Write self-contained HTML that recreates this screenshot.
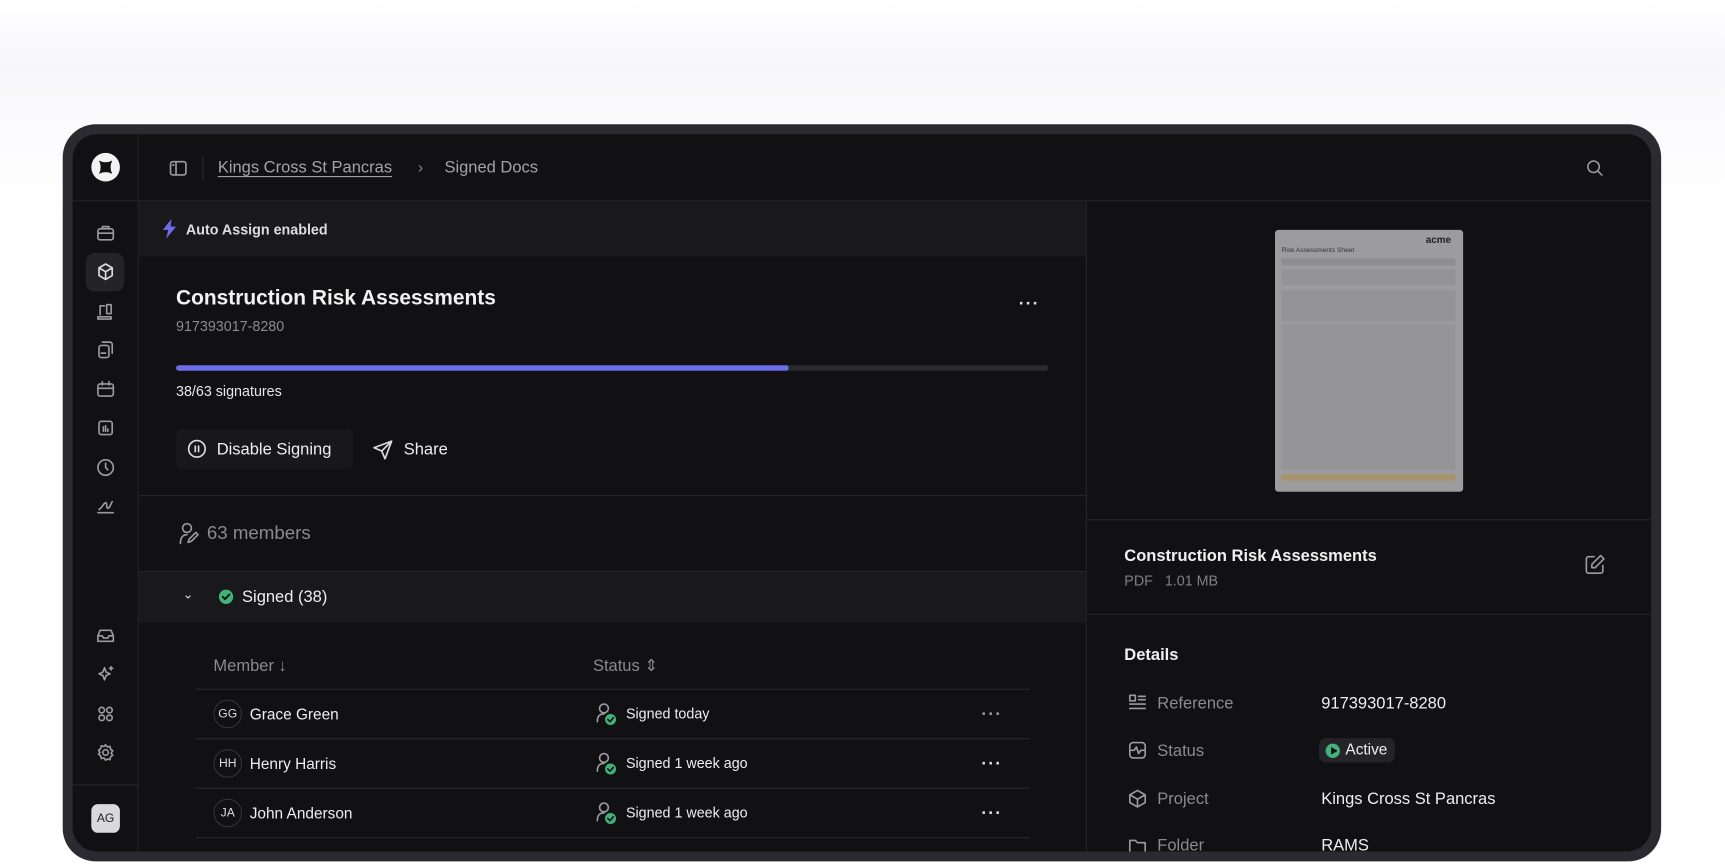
<!DOCTYPE html>
<html><head><meta charset="utf-8"><style>
*{box-sizing:border-box;margin:0;padding:0}
html,body{width:1725px;height:863px;overflow:hidden;background:#fff;font-family:"Liberation Sans",sans-serif}
#s{position:absolute;left:0;top:0;width:1568px;height:785px;transform:scale(1.1001);transform-origin:0 0;background:linear-gradient(#fff 0,#f7f7fb 60px,#fbfbfd 110px,#fff 200px)}
.a{position:absolute}
.frame{left:57px;top:113px;width:1453px;height:670px;background:#2b2a31;border-radius:30px}
.app{left:66px;top:122px;width:1435px;height:652px;background:#111113;border-radius:22px;overflow:hidden}
.vl{position:absolute;width:1px;background:#252528}
.hl{position:absolute;height:1px;background:#252528}
.t{position:absolute;white-space:nowrap;line-height:1}
svg{position:absolute;fill:none;stroke:#9a9aa0;stroke-width:1.5;stroke-linecap:round;stroke-linejoin:round}
.ic{width:18px;height:18px}
.av{position:absolute;width:26px;height:26px;border:1px solid #333;border-radius:50%;color:#ddd;font-size:11px;text-align:center;line-height:24px}
.dots{position:absolute;color:#ddd;font-size:16px;letter-spacing:1px;font-weight:bold}
</style></head><body><div id="s">
<div class="a frame"></div>
<div class="a app">
 <div class="vl" style="left:59px;top:0;height:700px"></div>
 <div class="hl" style="left:0;top:60px;width:1435px"></div>
 <div class="vl" style="left:921px;top:61px;height:640px"></div>
 <div class="a" style="left:17px;top:17px;width:26px;height:26px;border-radius:50%;background:#f2f2f2"></div>
 <svg style="left:22px;top:22px;width:16px;height:16px;stroke:none;fill:#111" viewBox="0 0 16 16"><path d="M2 2Q8 5 14 2Q11 8 14 14Q8 11 2 14Q5 8 2 2Z"/></svg>
 <div class="a" style="left:12px;top:108px;width:35px;height:35px;border-radius:8px;background:#242427"></div>
 <svg class="ic" style="left:21px;top:81px" viewBox="0 0 18 18"><rect x="2" y="5" width="14" height="10" rx="2"/><path d="M6 5V3h6v2M2 9h14"/></svg>
 <svg class="ic" style="left:21px;top:116px;stroke:#ddd" viewBox="0 0 18 18"><path d="M9 2l6 3.5v7L9 16l-6-3.5v-7z M3 5.5L9 9l6-3.5M9 9v7"/></svg>
 <svg class="ic" style="left:21px;top:152px" viewBox="0 0 18 18"><path d="M4 12V4h4M2 14h12v2H2zM10 3h4v8h-4z"/></svg>
 <svg class="ic" style="left:21px;top:187px" viewBox="0 0 18 18"><rect x="3" y="5" width="9" height="11" rx="2"/><path d="M6 2h7a2 2 0 012 2v8M5 12h4"/></svg>
 <svg class="ic" style="left:21px;top:223px" viewBox="0 0 18 18"><rect x="2" y="4" width="14" height="11" rx="2"/><path d="M6 2v3M12 2v3M2 8h14"/></svg>
 <svg class="ic" style="left:21px;top:258px" viewBox="0 0 18 18"><rect x="3" y="3" width="12" height="12" rx="2"/><path d="M7 12V8M9 12V7M11 12v-2"/></svg>
 <svg class="ic" style="left:21px;top:294px" viewBox="0 0 18 18"><circle cx="9" cy="9" r="7"/><path d="M9 5v4l2 2"/></svg>
 <svg class="ic" style="left:21px;top:329px" viewBox="0 0 18 18"><path d="M2 15h14M3 12c3-1 4-6 6-6s0 5 2 5 2-3 4-6"/></svg>
 <svg class="ic" style="left:21px;top:447px" viewBox="0 0 18 18"><path d="M2 9l2-5h10l2 5v5H2zM2 9h4l1 2h4l1-2h4"/></svg>
 <svg class="ic" style="left:21px;top:482px" viewBox="0 0 18 18"><path d="M8 3l1.5 4L13 8.5 9.5 10 8 14 6.5 10 3 8.5 6.5 7zM14 2v3M12.5 3.5h3"/></svg>
 <svg class="ic" style="left:21px;top:518px" viewBox="0 0 18 18"><circle cx="5.5" cy="5.5" r="2.5"/><circle cx="12.5" cy="5.5" r="2.5"/><circle cx="5.5" cy="12.5" r="2.5"/><circle cx="12.5" cy="12.5" r="2.5"/></svg>
 <svg class="ic" style="left:21px;top:553px" viewBox="0 0 18 18"><circle cx="9" cy="9" r="2.5"/><path d="M9 2l1.5 2 2.5-.5.5 2.5 2 1.5-1.5 2 1.5 2-2 1.5-.5 2.5-2.5-.5L9 16l-1.5-2-2.5.5-.5-2.5-2-1.5L4 9 2.5 7l2-1.5.5-2.5 2.5.5z"/></svg>
 <div class="hl" style="left:0;top:591px;width:59px"></div>
 <div class="a" style="left:17px;top:609px;width:26px;height:26px;border-radius:6px;background:#d9d9dc;color:#222;font-size:11px;text-align:center;line-height:26px">AG</div>
 <svg class="ic" style="left:87px;top:22px" viewBox="0 0 18 18"><rect x="2" y="3" width="14" height="12" rx="2"/><path d="M7 3v12M4 6h1"/></svg>
 <div class="vl" style="left:118px;top:20px;height:22px;background:#2a2a2d"></div>
 <div class="t" style="left:132px;top:23px;font-size:15px;color:#a3a3a8;text-decoration:underline;text-underline-offset:3px">Kings Cross St Pancras</div>
 <div class="t" style="left:314px;top:23px;font-size:14px;color:#888">›</div>
 <div class="t" style="left:338px;top:23px;font-size:15px;color:#a3a3a8">Signed Docs</div>
 <svg class="ic" style="left:1375px;top:22px;width:17px;height:17px" viewBox="0 0 18 18"><circle cx="8" cy="8" r="5.5"/><path d="M12 12l4 4"/></svg>
 <div class="a" style="left:60px;top:61px;width:861px;height:50px;background:#19191b"></div>
 <svg style="left:80px;top:77px;width:16px;height:18px;stroke:none;fill:#6d6cf0" viewBox="0 0 16 18"><path d="M10 0L2 10h5l-2 8 9-11H9z"/></svg>
 <div class="t" style="left:103px;top:80px;font-size:13px;color:#ddd;font-weight:bold">Auto Assign enabled</div>
 <div class="t" style="left:94px;top:140px;font-size:19px;color:#f2f2f2;font-weight:bold">Construction Risk Assessments</div>
 <div class="t" style="left:94px;top:168px;font-size:13px;color:#8a8a8f">917393017-8280</div>
 <div class="dots" style="left:860px;top:146px">···</div>
 <div class="a" style="left:94px;top:210px;width:793px;height:5px;border-radius:3px;background:#2a2a2e"></div>
 <div class="a" style="left:94px;top:210px;width:557px;height:5px;border-radius:3px;background:#6b6aea"></div>
 <div class="t" style="left:94px;top:227px;font-size:13px;color:#e6e6e6">38/63 signatures</div>
 <div class="a" style="left:94px;top:268px;width:161px;height:36px;border-radius:6px;background:#18181a"></div>
 <svg class="ic" style="left:104px;top:277px;stroke:#ddd" viewBox="0 0 18 18"><circle cx="9" cy="9" r="7.5"/><path d="M7.5 6.5v5M10.5 6.5v5"/></svg>
 <div class="t" style="left:131px;top:279px;font-size:15px;color:#eee">Disable Signing</div>
 <svg class="ic" style="left:272px;top:277px;stroke:#ddd;width:20px;height:20px" viewBox="0 0 20 20"><path d="M18 2L2 8l7 3 3 7zM9 11l9-9"/></svg>
 <div class="t" style="left:301px;top:279px;font-size:15px;color:#eee">Share</div>
 <div class="hl" style="left:60px;top:328px;width:861px"></div>
 <svg class="ic" style="left:96px;top:352px;width:20px;height:22px" viewBox="0 0 20 22"><circle cx="8" cy="6" r="4"/><path d="M2 20c0-5 2-8 6-8M16 10l2 2-6 6-3 1 1-3z"/></svg>
 <div class="t" style="left:122px;top:354px;font-size:17px;color:#8a8a8f">63 members</div>
 <div class="hl" style="left:60px;top:397px;width:861px"></div>
 <div class="a" style="left:60px;top:398px;width:861px;height:46px;background:#19191b"></div>
 <div class="t" style="left:100px;top:412px;font-size:12px;color:#ddd">⌄</div>
 <div class="a" style="left:133px;top:414px;width:13px;height:13px;border-radius:50%;background:#3fb37a"></div>
 <svg style="left:135px;top:416px;width:9px;height:9px;stroke:#111;stroke-width:1.8" viewBox="0 0 9 9"><path d="M1.5 4.5l2 2 4-4"/></svg>
 <div class="t" style="left:154px;top:413px;font-size:15px;color:#eee">Signed (38)</div>
 <div class="t" style="left:128px;top:476px;font-size:15px;color:#8a8a8f">Member ↓</div>
 <div class="t" style="left:473px;top:476px;font-size:15px;color:#8a8a8f">Status ⇕</div>
 <div class="hl" style="left:112px;top:504px;width:758px;background:#2a2a2d"></div>
 <div class="hl" style="left:112px;top:549px;width:758px;background:#2a2a2d"></div>
 <div class="hl" style="left:112px;top:594px;width:758px;background:#2a2a2d"></div>
 <div class="hl" style="left:112px;top:639px;width:758px;background:#2a2a2d"></div>
 <div class="av" style="left:128px;top:514px">GG</div><div class="t" style="left:161px;top:520px;font-size:14px;color:#eee">Grace Green</div>
 <div class="av" style="left:128px;top:559px">HH</div><div class="t" style="left:161px;top:565px;font-size:14px;color:#eee">Henry Harris</div>
 <div class="av" style="left:128px;top:604px">JA</div><div class="t" style="left:161px;top:610px;font-size:14px;color:#eee">John Anderson</div>
 <div class="t" style="left:503px;top:520px;font-size:13px;color:#eee">Signed today</div>
 <div class="t" style="left:503px;top:565px;font-size:13px;color:#eee">Signed 1 week ago</div>
 <div class="t" style="left:503px;top:610px;font-size:13px;color:#eee">Signed 1 week ago</div>
 <svg style="left:475px;top:516px;width:20px;height:22px" viewBox="0 0 20 22"><circle cx="8" cy="6" r="4"/><path d="M2 18c0-5 2-7 6-7"/><circle cx="14" cy="16" r="5" fill="#3fb37a" stroke="none"/><path d="M11.5 16l2 2 3-3.5" stroke="#111"/></svg>
 <svg style="left:475px;top:561px;width:20px;height:22px" viewBox="0 0 20 22"><circle cx="8" cy="6" r="4"/><path d="M2 18c0-5 2-7 6-7"/><circle cx="14" cy="16" r="5" fill="#3fb37a" stroke="none"/><path d="M11.5 16l2 2 3-3.5" stroke="#111"/></svg>
 <svg style="left:475px;top:606px;width:20px;height:22px" viewBox="0 0 20 22"><circle cx="8" cy="6" r="4"/><path d="M2 18c0-5 2-7 6-7"/><circle cx="14" cy="16" r="5" fill="#3fb37a" stroke="none"/><path d="M11.5 16l2 2 3-3.5" stroke="#111"/></svg>
 <div class="dots" style="left:826px;top:519px;color:#999">···</div>
 <div class="dots" style="left:826px;top:564px">···</div>
 <div class="dots" style="left:826px;top:609px">···</div>
 <div class="a" style="left:1093px;top:87px;width:171px;height:238px;background:#9c9c9e;border-radius:3px;overflow:hidden">
  <div class="t" style="left:137px;top:5px;font-size:9px;font-weight:bold;color:#222">acme</div>
  <div class="t" style="left:6px;top:16px;font-size:6px;color:#333">Risk Assessments Sheet</div>
  <div class="a" style="left:6px;top:26px;width:158px;height:6px;background:#8e8e90"></div>
  <div class="a" style="left:6px;top:36px;width:158px;height:14px;background:#939395"></div>
  <div class="a" style="left:6px;top:55px;width:158px;height:28px;background:#939395"></div>
  <div class="a" style="left:6px;top:86px;width:158px;height:132px;background:#959597"></div>
  <div class="a" style="left:6px;top:222px;width:158px;height:6px;background:#a8946c"></div>
 </div>
 <div class="hl" style="left:922px;top:350px;width:513px"></div>
 <div class="t" style="left:956px;top:376px;font-size:15px;color:#f0f0f0;font-weight:bold">Construction Risk Assessments</div>
 <div class="t" style="left:956px;top:399px;font-size:13px;color:#7f7f85">PDF&nbsp;&nbsp; 1.01 MB</div>
 <svg class="ic" style="left:1374px;top:381px;width:20px;height:20px" viewBox="0 0 20 20"><path d="M9 3H4a2 2 0 00-2 2v11a2 2 0 002 2h11a2 2 0 002-2v-5M15 2l3 3-8 8H7v-3z"/></svg>
 <div class="hl" style="left:922px;top:436px;width:513px"></div>
 <div class="t" style="left:956px;top:466px;font-size:15px;color:#f0f0f0;font-weight:bold">Details</div>
 <svg class="ic" style="left:959px;top:508px" viewBox="0 0 18 18"><rect x="2" y="2" width="5" height="5"/><path d="M10 3h6M10 6h6M2 10h14M2 14h14"/></svg>
 <svg class="ic" style="left:959px;top:551px" viewBox="0 0 18 18"><rect x="2" y="2" width="14" height="14" rx="3"/><path d="M2 9h4l2-3 2 6 2-3h4"/></svg>
 <svg class="ic" style="left:959px;top:595px" viewBox="0 0 18 18"><path d="M9 1.5l7 4v7l-7 4-7-4v-7z M2 5.5L9 9.5l7-4M9 9.5v7"/></svg>
 <svg class="ic" style="left:959px;top:638px" viewBox="0 0 18 18"><path d="M2 4h5l2 2h7v10H2z"/></svg>
 <div class="t" style="left:986px;top:510px;font-size:15px;color:#8a8a8f">Reference</div>
 <div class="t" style="left:986px;top:553px;font-size:15px;color:#8a8a8f">Status</div>
 <div class="t" style="left:986px;top:597px;font-size:15px;color:#8a8a8f">Project</div>
 <div class="t" style="left:986px;top:639px;font-size:15px;color:#8a8a8f">Folder</div>
 <div class="t" style="left:1135px;top:510px;font-size:15px;color:#eee">917393017-8280</div>
 <div class="a" style="left:1133px;top:549px;width:69px;height:22px;border-radius:6px;background:#242428"></div>
 <div class="a" style="left:1139px;top:554px;width:13px;height:13px;border-radius:50%;background:#3fb37a"></div>
 <svg style="left:1143px;top:557px;width:7px;height:7px;stroke:none;fill:#111" viewBox="0 0 7 7"><path d="M1 0l6 3.5L1 7z"/></svg>
 <div class="t" style="left:1157px;top:552px;font-size:14px;color:#eee">Active</div>
 <div class="t" style="left:1135px;top:597px;font-size:15px;color:#eee">Kings Cross St Pancras</div>
 <div class="t" style="left:1135px;top:639px;font-size:15px;color:#eee">RAMS</div>
</div>
</div></body></html>
